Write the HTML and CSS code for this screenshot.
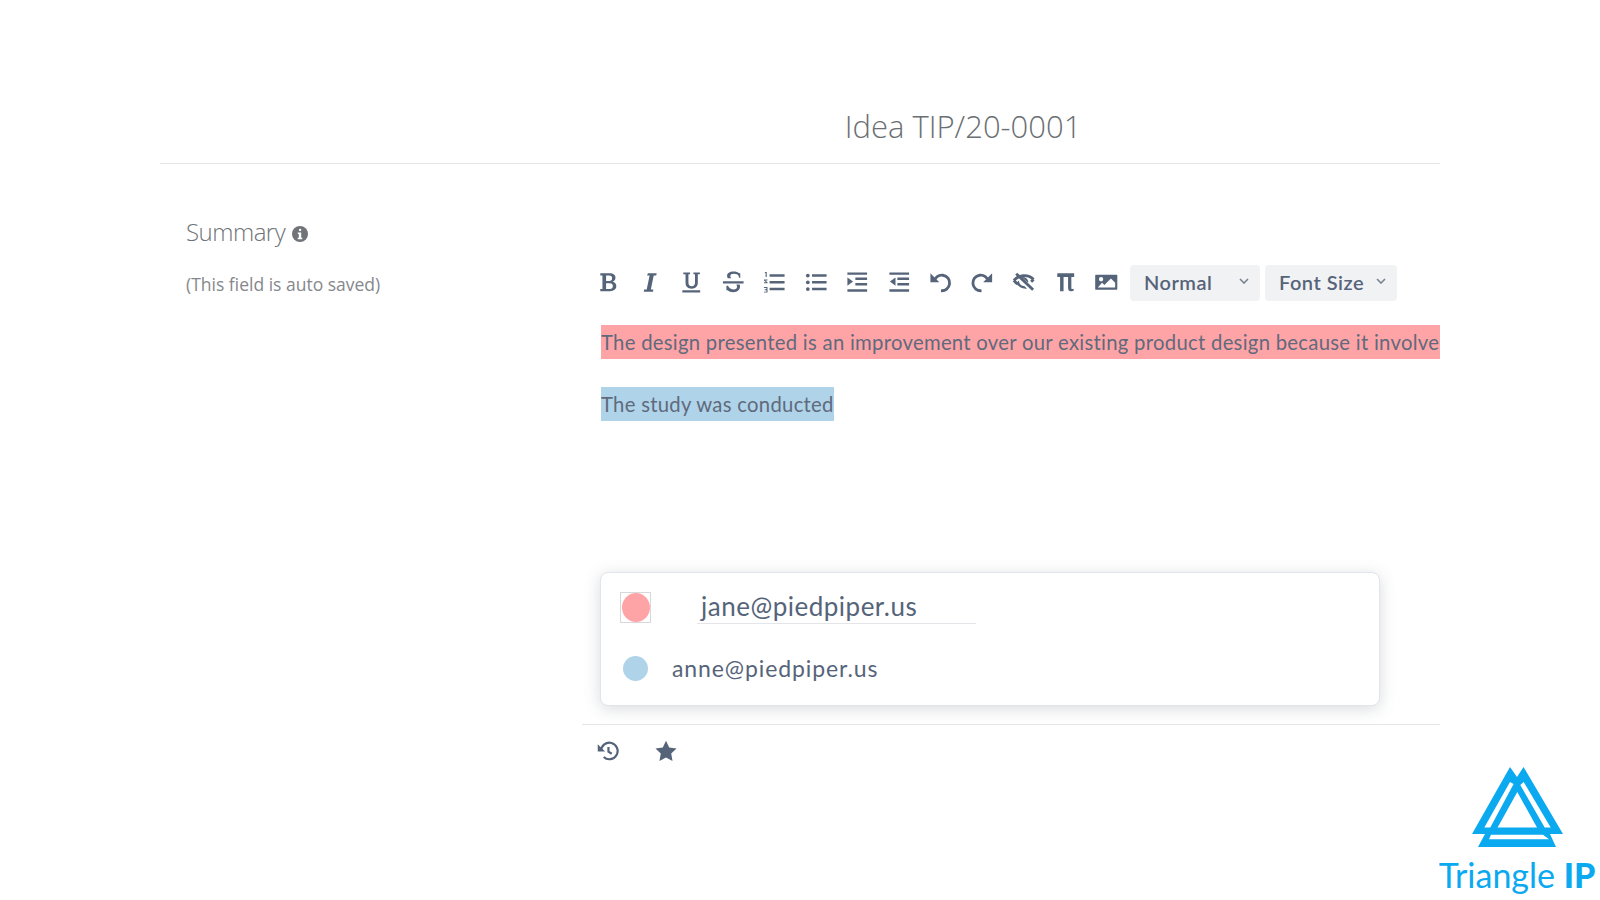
FILE: index.html
```html
<!DOCTYPE html>
<html lang="en">
<head>
<meta charset="utf-8">
<title>Idea TIP/20-0001</title>
<link rel="stylesheet" href="styles.css">
</head>
<body>
<main class="page">
  <header class="page-head"><h1 class="title">Idea TIP/20-0001</h1></header>
  <section class="content">
    <aside class="side">
      <h2 class="side-title">Summary
        <svg class="info" viewBox="0 0 16 16"><circle cx="8" cy="8" r="8"/><rect class="cut" x="6.9" y="2.8" width="2.4" height="2.4" rx="1.1"/><path class="cut" d="M5.8 6.6h3.4v5.2h1.1v1.5H5.7v-1.5h1.1V8.1h-1z"/></svg>
      </h2>
      <p class="side-note">(This field is auto saved)</p>
    </aside>
    <div class="main">
      <div class="toolbar">
        <svg class="ic" viewBox="0 0 24 24"><path class="f" fill-rule="evenodd" d="M3.500 2.500h10.200c3.600 0 6 1.800 6 4.800 0 2-1.100 3.500-3 4.200 2.400.6 3.900 2.200 3.900 4.600 0 3.400-2.700 5.400-6.700 5.400H3.500v-2.200h2.300V4.700H3.500zM9.700 4.700v6h3.400c2 0 3-1.100 3-3s-1-3-3-3zm0 8.300v6.300h4c2.100 0 3.200-1.200 3.200-3.200S15.800 13 13.700 13z"/></svg>
        <svg class="ic" viewBox="0 0 24 24"><path class="f" d="M9.500 2.500h9.300l-.4 2.200h-2.700l-3.100 15.100h2.700l-.4 2.200H5.100l.4-2.200h2.700l3.100-15.100H8.600z"/></svg>
        <svg class="ic" viewBox="0 0 24 24"><path class="f" d="M3.500 1.500h7.200v2H9v8.700c0 2.700 1.200 4.100 3.500 4.100s3.500-1.400 3.500-4.100V3.500h-1.700v-2h6.900v2H19v8.800c0 4.300-2.500 6.500-6.600 6.500S5.900 16.600 5.900 12.300V3.500H3.500zM2.500 20.500h19v2.400h-19z"/></svg>
        <svg class="ic" viewBox="0 0 24 24"><path class="f" d="M1 11h22v2.200H1zM17.800 5.200c-.7-1.400-2.600-2.200-5.300-2.200-2.200 0-3.600.9-3.600 2.500 0 1 .5 1.700 1.500 2.300H6.300C5.700 7 5.400 6.200 5.400 5.300 5.400 2.300 8 .5 12.300.5c2.700 0 4.700.7 6 1.900h1.200v4.900h-1.400zM15.200 14.500h3.500c.4.700.5 1.400.5 2.100 0 3.700-2.800 6-7.100 6-2.600 0-4.900-.7-6.100-2.100H4.700v-4.700h1.700c.8 2 2.800 3.900 5.800 3.900 2.500 0 3.800-1.100 3.800-2.900 0-.9-.2-1.700-.8-2.300z"/></svg>
        <svg class="ic" viewBox="0 0 24 24"><path class="f" d="M7 3.500h16v2.600H7zM7 10.700h16v2.600H7zM7 17.900h16v2.600H7zM2 1h2v5.500H2.800V2.200H2zM1 9h3.800v1H2.500l2.300 2v1H1v-1h2.300L1 10zM1 17h3.800v6H1v-1h2.600v-1.500H1.800v-1h1.800V18H1z"/></svg>
        <svg class="ic" viewBox="0 0 24 24"><circle class="f" cx="3" cy="4.800" r="2"/><circle class="f" cx="3" cy="12" r="2"/><circle class="f" cx="3" cy="19.200" r="2"/><path class="f" d="M7.500 3.500H23v2.600H7.500zM7.500 10.700H23v2.600H7.500zM7.500 17.900H23v2.600H7.500z"/></svg>
        <svg class="ic" viewBox="0 0 24 24"><path class="f" d="M1.500 1.500h21v2.600h-21zM10 7h12.500v2.600H10zM10 12.800h12.500v2.600H10zM1.500 19.500h21v2.600h-21zM1.500 7l6 4.300-6 4.300z"/></svg>
        <svg class="ic" viewBox="0 0 24 24"><path class="f" d="M1.500 1.500h21v2.600h-21zM10 7h12.500v2.600H10zM10 12.800h12.500v2.600H10zM1.500 19.500h21v2.600h-21zM8 7l-6 4.300 6 4.300z"/></svg>
        <svg class="ic" viewBox="0 0 24 24"><path class="s" d="M5.500 11.500A8.300 8.300 0 1 1 12.800 21"/><path class="f" d="M1.500 2.500l9.500 9.500H1.500z"/></svg>
        <svg class="ic" viewBox="0 0 24 24"><path class="s" d="M18.500 11.500A8.300 8.300 0 1 0 11.200 21"/><path class="f" d="M22.500 2.500L13 12h9.500z"/></svg>
        <svg class="ic" viewBox="0 0 24 24"><path class="s" d="M2 10c5-6 15-7 21-1M2 10c1.300 1.800 2.700 3 4.300 4M23 9l-2.600 2.500"/><path class="s" d="M4.500 3l18 17"/><path class="f" d="M10 6.500c3-.8 6 .7 7 3.500 .4 1 .3 1.800.2 2.400zM7.500 10c-.4 3.200 2.300 6.200 6 6.200l2.500 2.600c-5 .6-8.500-2-9.800-3.600L4 13l3.500-3z"/></svg>
        <svg class="ic" viewBox="0 0 24 24"><path class="f" d="M3.500 2.500h18v3.800h-3v11c0 1.500.3 2 .9 2 .4 0 .8-.2 1.100-.5l1 1.400c-.8 1-2 1.500-3.400 1.500-2.100 0-3.100-1.200-3.100-3.800V6.300h-4.800v15.400H6.500V6.300h-3z"/></svg>
        <svg class="ic" viewBox="0 0 24 24"><path class="f" fill-rule="evenodd" d="M1 4h22a.8.8 0 0 1 .8.8v14.400a.8.8 0 0 1-.8.8H1a.8.8 0 0 1-.8-.8V4.800A.8.800 0 0 1 1 4zM6.500 6.500a2.300 2.300 0 1 0 0 4.600 2.300 2.300 0 0 0 0-4.600zM3 17.500h18.500v-5l-4.500-4.500-7 7-2.500-2.500L3 17.500z"/></svg>
        <div class="selects">
          <div class="select select-size1">Normal<svg class="chev" viewBox="0 0 10 6"><path d="M1 1l4 4 4-4"/></svg></div>
          <div class="select select-size2">Font Size<svg class="chev" viewBox="0 0 10 6"><path d="M1 1l4 4 4-4"/></svg></div>
        </div>
      </div>
      <div class="editor">
        <p class="line"><span class="mark mark-red mark-full">The design presented is an improvement over our existing product design because it involves a new method of forming the part</span></p>
        <p class="line"><span class="mark mark-blue">The study was conducted</span></p>
      </div>
      <div class="card">
        <div class="user user-active">
          <span class="swatch-box"><span class="dot dot-red"></span></span>
          <span class="user-input">jane@piedpiper.us</span>
        </div>
        <div class="user">
          <span class="dot dot-blue"></span>
          <span class="user-name">anne@piedpiper.us</span>
        </div>
      </div>
      <div class="foot">
        <svg class="foot-ic" viewBox="0 0 24 24"><path class="s2" d="M4.500 12a9 9 0 1 1 2.800 6.500"/><path class="f" d="M0.800 4.500l8 8H.8z"/><path class="s2" d="M12.500 7.500v5.200l3.600 2.300"/></svg>
        <svg class="foot-ic star" viewBox="0 0 24 24"><path class="f" d="M12 .8l3.500 7.300 8 1.100-5.800 5.600 1.400 8L12 19l-7.100 3.800 1.400-8L.5 9.200l8-1.100z"/></svg>
      </div>
    </div>
  </section>
</main>
<div class="logo">
  <svg class="logo-mark" viewBox="0 0 91 80"><path class="lg" fill-rule="evenodd" d="M38 0L45 10 51.500 0 91 67H78L84 80H6L13 67H0zM38 15L12.300 60.600H18.300L41.600 17zM51.700 15L48.300 18 72.700 60.600H78.700zM45.300 25L25.600 60.600H65zM19 67.700L17 72.300H77L71 67.700z"/></svg>
  <div class="logo-text">Triangle <b>IP</b></div>
</div>
</body>
</html>
```
FILE: styles.css
```css
* { box-sizing: border-box; }
html, body { margin: 0; height: 100%; background: #fff; overflow: hidden; }
body { font-family: "Lato", "Noto Sans", sans-serif; color: #56647a; position: relative; }
.page { padding: 0 160px; }
.page-head { height: 164px; border-bottom: 1px solid #e3e5e8; padding: 106px 0 0 326px; text-align: center; }
.title { margin: 0; font: 300 31px/40px "Open Sans", sans-serif; color: #6b6f73; }
.content { display: flex; }
.side { width: 422px; padding: 49px 0 0 26px; flex: none; }
.side-title { margin: 0; font: 300 24px/38px "Open Sans", sans-serif; color: #6f7478; display: flex; align-items: center; gap: 7px; letter-spacing: -.5px; }
.info { width: 16px; height: 16px; margin-top: 3px; }
.info circle { fill: #707478; }
.cut { fill: #fff; }
.side-note { margin: 21px 0 0; font: 400 17.500px/24px "Open Sans", sans-serif; color: #85888c; }
.main { flex: 1; min-width: 0; overflow: hidden; }
.toolbar { display: flex; align-items: center; padding: 100px 0 0 15px; height: 137px; }
.ic { width: 22.500px; height: 22.500px; margin-right: 19px; flex: none; }
.f { fill: #56647a; }
.s { fill: none; stroke: #56647a; stroke-width: 3; }
.s2 { fill: none; stroke: #56647a; stroke-width: 2.400; }
.selects { display: flex; gap: 5px; margin-left: -6.500px; }
.select { height: 36px; border-radius: 4px; background: #f1f2f4; display: flex; align-items: center; justify-content: space-between; padding: 0 11px 2px 14px; font: 600 20px/34px "Lato", sans-serif; letter-spacing: .5px; color: #56647a; }
.select-size1 { width: 130px; }
.select-size2 { width: 132px; }
.chev { width: 10px; height: 6px; margin-top: -2px; }
.chev path { fill: none; stroke: #78838f; stroke-width: 1.600; }
.editor { padding: 24px 0 0 19px; height: 271px; }
.line { margin: 0 0 29px; font-size: 20.300px; line-height: 34px; height: 33px; white-space: nowrap; letter-spacing: .28px; }
.mark { display: inline-block; height: 34px; line-height: 33px; padding-top: 1px; color: #5f6a7d; }
.mark-red { background: #ffa4a6; }
.mark-full { width: 100%; overflow: hidden; min-width: 1200px; }
.mark-blue { background: #afd3e8; }
.card { margin-left: 18px; width: 780px; height: 134px; border: 1px solid #e2e4ea; border-radius: 8px; background: #fff; box-shadow: 0 3px 16px rgba(80, 90, 110, .22); padding: 18px 19px 0; }
.user { display: flex; align-items: center; }
.user-active { height: 32px; }
.swatch-box { width: 31px; height: 31px; border: 1px solid #d8d8d8; display: flex; align-items: center; justify-content: center; flex: none; }
.dot { display: block; border-radius: 50%; flex: none; }
.dot-red { width: 28px; height: 29px; background: #ffa4a6; }
.dot-blue { width: 25px; height: 25px; margin: 0 24px 0 3px; background: #afd3e8; }
.user-input { width: 279px; margin-left: 46px; height: 34px; border-bottom: 1px solid #e3e5e8; padding: 1px 0 0 4px; font-size: 26px; line-height: 30px; letter-spacing: .5px; }
.user + .user { margin-top: 30px; height: 30px; }
.user-name { font-size: 23px; line-height: 30px; letter-spacing: .9px; }
.foot { margin-top: 18px; border-top: 1px solid #e3e5e8; padding: 15px 0 0 15px; display: flex; align-items: center; gap: 36px; }
.foot-ic { width: 22px; height: 22px; flex: none; }
.star { width: 22px; height: 22px; }
.logo { position: absolute; left: 1436px; top: 767px; width: 162px; display: flex; flex-direction: column; align-items: center; }
.logo-mark { width: 91px; height: 80px; margin: 0 0 0 1px; }
.lg { fill: #0aa9f0; }
.logo-text { font: 400 34px/40px "Lato", sans-serif; color: #0aa9f0; white-space: nowrap; margin-top: 8px; }
.logo-text b { font-weight: 900; }
```
